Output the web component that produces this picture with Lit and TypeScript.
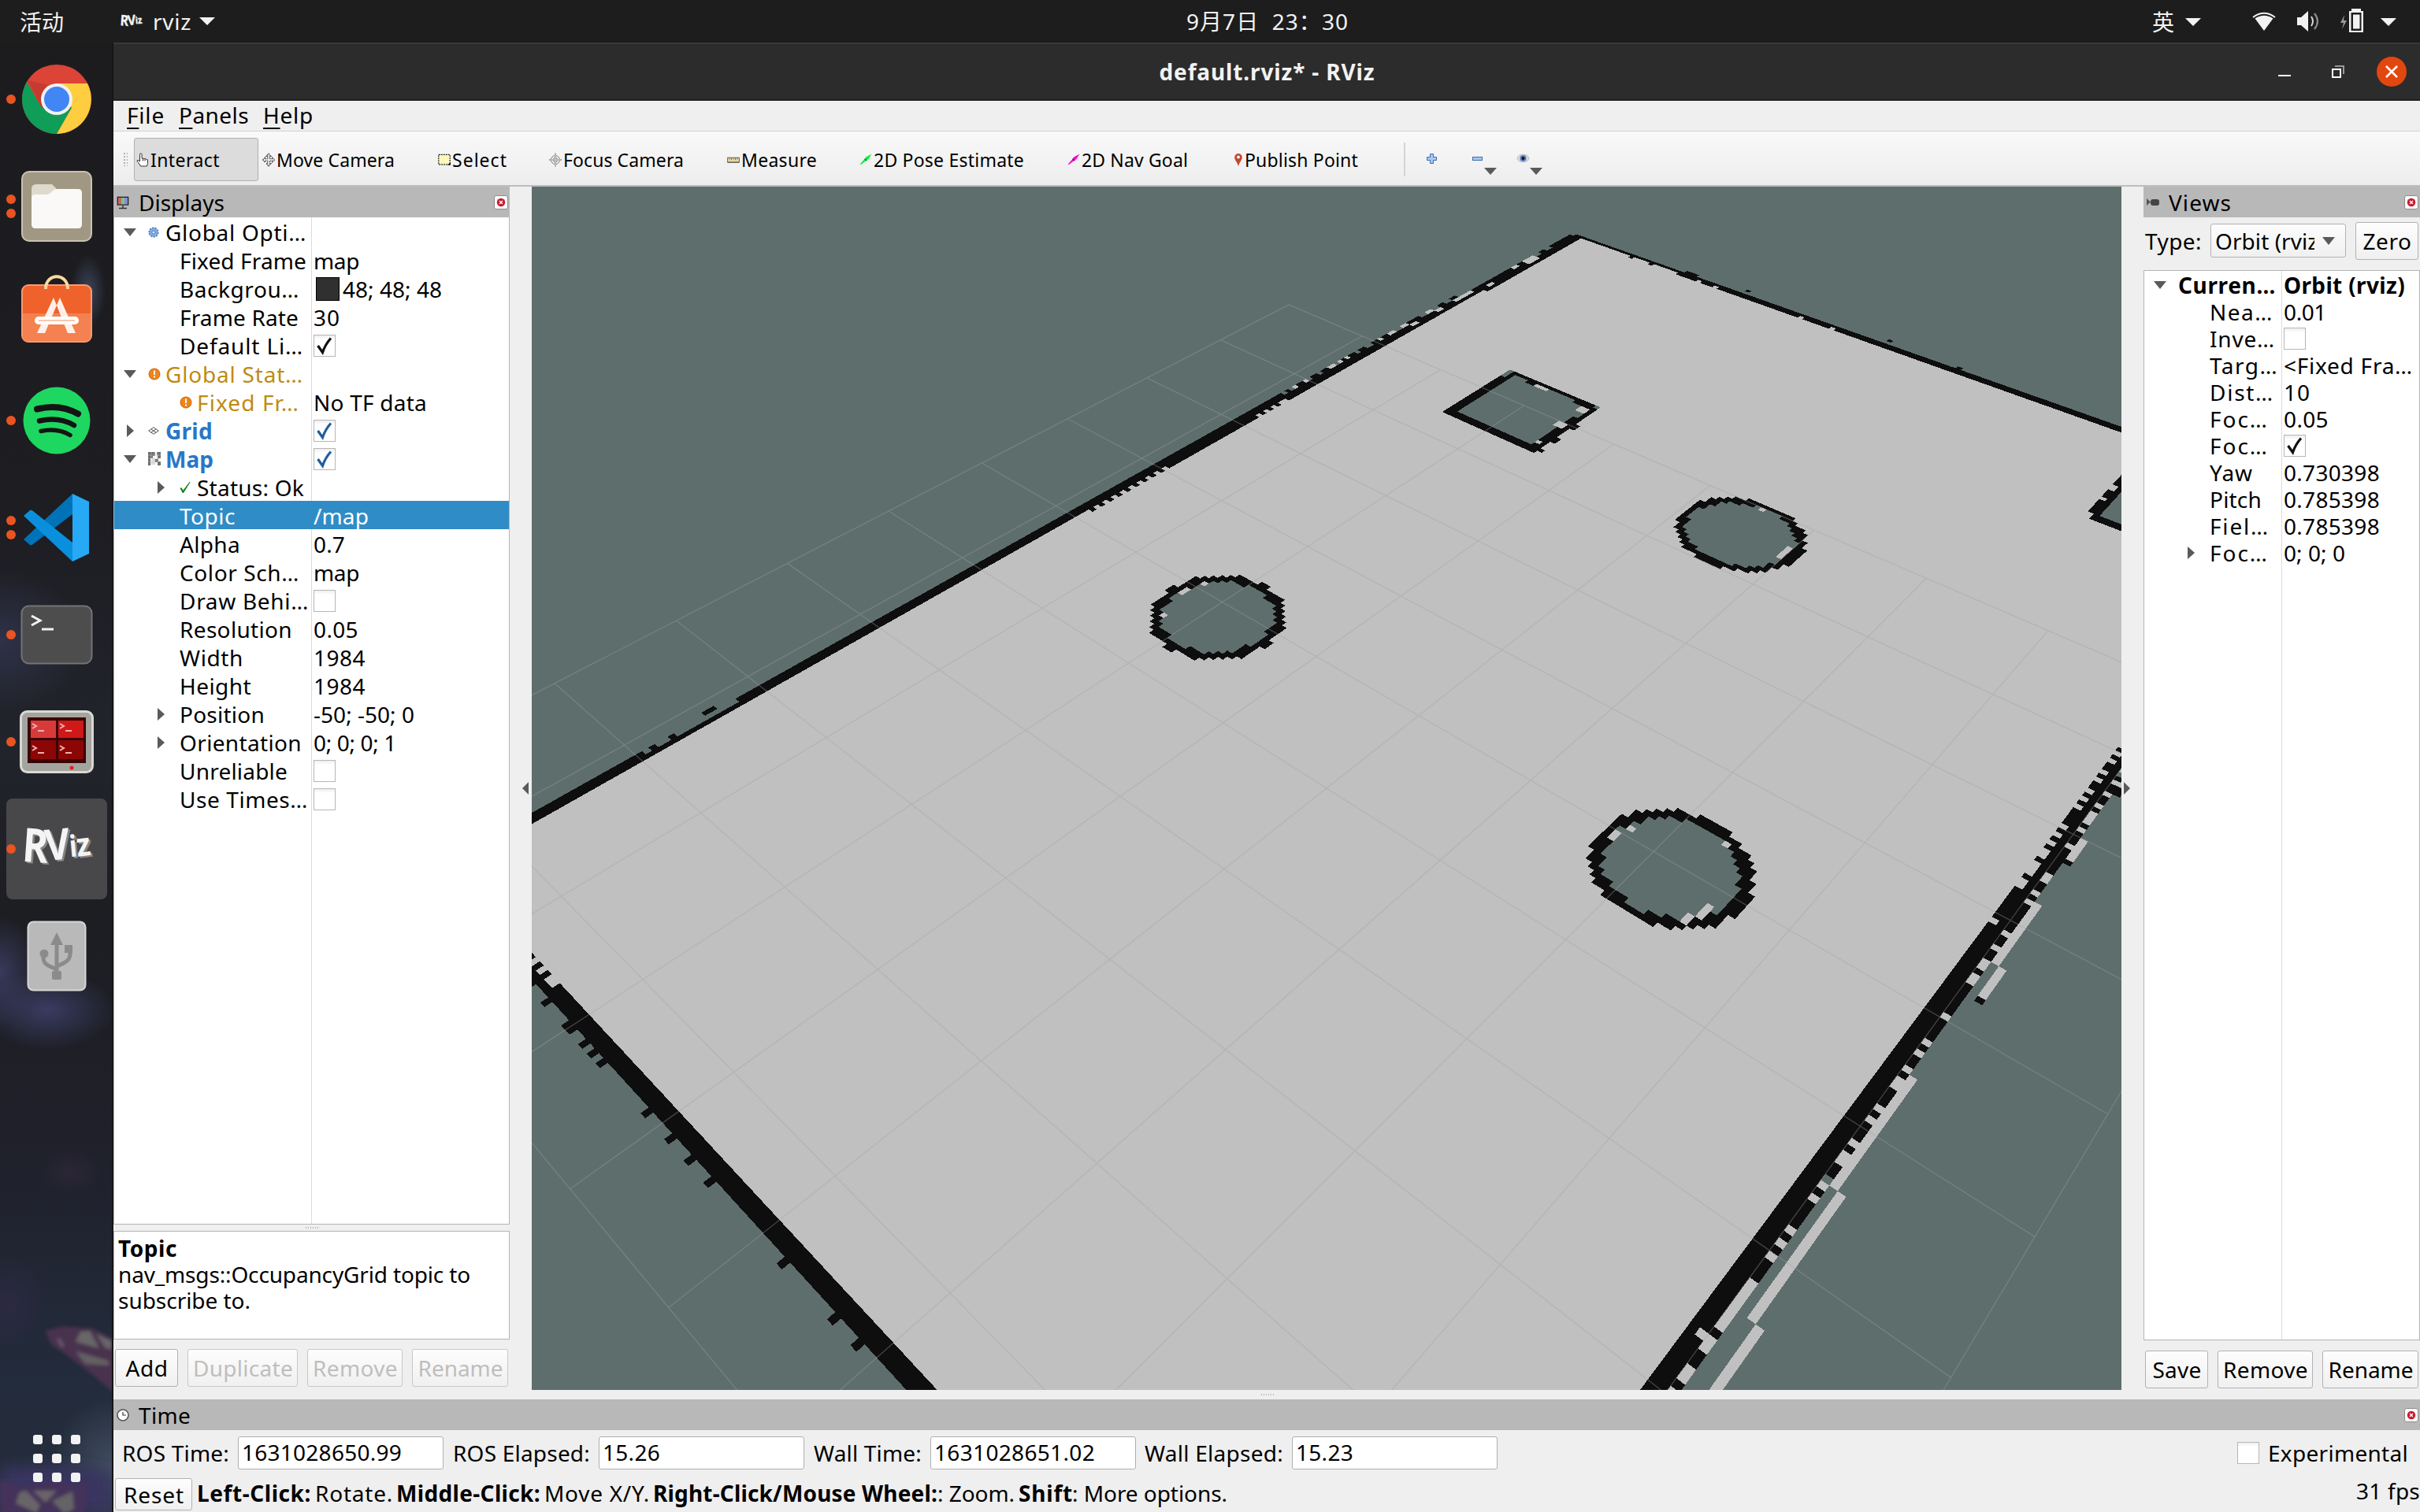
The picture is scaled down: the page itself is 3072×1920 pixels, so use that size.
import { LitElement, html, svg, css, nothing } from "lit";
import { customElement, property } from "lit/decorators.js";

const FAMILY = '"Noto Sans", "Noto Sans CJK SC", sans-serif';
const pen = document.createElement("canvas").getContext("2d")!;

/** Text tracked so that it fills `width` pixels. */
function fit(text: string, width: number, size = 28, bold = false, cls = "") {
  pen.font = `${bold ? 700 : 400} ${size}px ${FAMILY}`;
  const natural = pen.measureText(text).width;
  const spacing = (width + 3 - natural) / text.length;
  return html`<span
    class="fit ${bold ? "bold" : ""} ${size < 26 ? "small" : ""} ${cls}"
    style="letter-spacing:${spacing.toFixed(3)}px;width:${width + 3}px"
    >${text}</span
  >`;
}

const textStyles = css`
  .fit {
    display: inline-block;
    flex: none;
    font-size: 28px;
    white-space: pre;
    margin-left: -1px;
    margin-right: -2px;
  }
  .small {
    font-size: 23px;
  }
  .bold {
    font-weight: 700;
  }
  * {
    box-sizing: border-box;
  }
`;

/* ------------------------------------------------------------------ */
/* 3D viewport: orbit camera over the occupancy grid                   */
/* ------------------------------------------------------------------ */

const VIEW = { x: 675, y: 238, w: 2018, h: 1528 };
const CX = 1684;
const CY = 1002;
const FOCAL = VIEW.h / 2 / Math.tan(0.785398 / 2);
const YAW = 0.730398;
const CYAW = Math.cos(YAW);
const SYAW = Math.sin(YAW);
const K = Math.SQRT1_2;
const DIST = 10;
const CELL = 0.05;

type Pt = [number, number];
type Tone = "b" | "g" | "t";

function project(x: number, y: number): Pt {
  const t = K * (CYAW * x + SYAW * y);
  const s = -SYAW * x + CYAW * y;
  const d = DIST - t;
  return [CX + (FOCAL * s) / d, CY + (FOCAL * t) / d];
}

function unproject(px: number, py: number): Pt {
  const a = (px - CX) / FOCAL;
  const b = (CY - py) / FOCAL;
  const d = DIST / (1 - b);
  const t = (DIST - d) / K;
  const s = a * d;
  return [CYAW * t - SYAW * s, SYAW * t + CYAW * s];
}

function quad(x0: number, x1: number, y0: number, y1: number): string {
  const c = [project(x0, y0), project(x1, y0), project(x1, y1), project(x0, y1)];
  return "M" + c.map((p) => p[0].toFixed(1) + " " + p[1].toFixed(1)).join("L") + "Z";
}

class Layer {
  cells = new Map<string, Tone>();
  set(i: number, j: number, c: Tone) {
    this.cells.set(i + "," + j, c);
  }
  at(pts: Pt[], c: Tone) {
    for (const [px, py] of pts) {
      const [x, y] = unproject(px, py);
      this.set(Math.floor(x / CELL), Math.floor(y / CELL), c);
    }
  }
  /** Fill the cells x0..x1, y0..y1 (metres). */
  box(x0: number, x1: number, y0: number, y1: number, c: Tone) {
    for (let i = Math.round(x0 / CELL); i < Math.round(x1 / CELL); i++)
      for (let j = Math.round(y0 / CELL); j < Math.round(y1 / CELL); j++) this.set(i, j, c);
  }
  /** Runs along the X axis in the column that starts at y; limits are viewport rows. */
  strip(y: number, runs: [number, number, Tone][]) {
    const j = Math.round(y / CELL);
    for (let i = -90; i < 60; i++) {
      const py = project((i + 0.5) * CELL, (j + 0.5) * CELL)[1];
      const run = runs.find((r) => py >= r[0] && py < r[1]);
      if (run) this.set(i, j, run[2]);
    }
  }
  ring(x: number, y: number, r: number, inner: number) {
    for (let i = Math.floor((x - 1) / CELL); i < (x + 1) / CELL; i++)
      for (let j = Math.floor((y - 1) / CELL); j < (y + 1) / CELL; j++) {
        const d = Math.hypot((i + 0.5) * CELL - x, (j + 0.5) * CELL - y);
        if (d < inner) this.set(i, j, "t");
        else if (d < r) this.set(i, j, "b");
      }
  }
  path(c: Tone): string {
    let d = "";
    for (const [k, v] of this.cells) {
      if (v !== c) continue;
      const [i, j] = k.split(",").map(Number);
      d += quad(i * CELL, (i + 1) * CELL, j * CELL, (j + 1) * CELL);
    }
    return d;
  }
}

function noise(n: number): number {
  const v = Math.sin(n * 127.1 + 11.7) * 43758.5453;
  return v - Math.floor(v);
}

function buildMap(): Layer {
  const m = new Layer();
  // far-left wall, near part
  m.box(-3.6, 4.45, -3.8, -3.75, "b");
  for (let i = -72; i < 89; i++) {
    const [px] = project((i + 0.5) * CELL, -3.82);
    const thin = px > 818 && px < 955;
    if (!thin) m.set(i, -77, "b");
    if (px > 1375 && px < 1470 && i % 2 === 0) m.set(i, -75, "b");
    if (px > 1470 && px < 1585) m.set(i, -75, "b");
    if (px > 1585 && px < 1620 && i % 2 === 0) m.set(i, -75, "b");
  }
  m.at([[829, 948], [853, 934], [896, 908], [901, 905], [907, 902], [938, 886], [943, 883], [949, 880]], "b");
  // far-left wall, far part
  m.box(-5.3, -3.6, -3.8, -3.7, "b");
  m.box(-6.6, -5.3, -3.75, -3.7, "b");
  m.box(-8.35, -6.6, -3.7, -3.65, "b");
  for (let i = -106; i < -72; i++) {
    const a = noise(i * 3);
    if (a < 0.35) m.set(i, -77, "b");
    else if (a < 0.48) m.set(i, -77, "g");
  }
  for (let i = -166; i < -106; i++) {
    const j = i < -132 ? -75 : -76;
    const a = noise(Math.floor(i / 2) * 3.3);
    m.set(i, j, a < 0.68 ? "b" : "g");
    const b = noise(Math.floor(i / 2) * 5.1 + 2);
    if (b < 0.35) m.set(i, j - 1, "b");
    else if (b < 0.5 && a >= 0.4) m.set(i, j - 1, "g");
    else if (i < -132 && b < 0.75) m.set(i, j - 1, "b");
  }
  // top-right wall
  m.box(-8.35, -8.3, -3.75, 7, "b");
  m.box(-8.3, -8.25, -2.4, 7, "b");
  m.at([[2070, 328], [2096, 336]], "b");
  m.at([[2143, 346], [2147, 347], [2152, 349], [2216, 371], [2395, 434], [2487, 467]], "b");
  m.at([[2177, 366], [2155, 357], [2286, 404], [2327, 418]], "g");
  // near-left wall
  m.box(4.4, 4.45, -3.75, 1.6, "b");
  m.box(4.35, 4.4, -2.35, 1.6, "b");
  for (let j = -60; j < -48; j++) {
    if (j % 2 === 0) {
      m.set(87, j, "b");
      m.set(89, j, "b");
    }
  }
  m.at(
    [[690, 1275], [719, 1306], [722, 1310], [740, 1327], [750, 1339], [762, 1352], [818, 1416], [849, 1450], [875, 1477], [900, 1505], [992, 1607], [1057, 1679], [1086, 1711]],
    "b",
  );
  // right wall
  m.strip(3.9, [[1128, 1167, "b"], [1174, 1850, "b"]]);
  m.at(
    [[2571.7, 1114.3], [2587.7, 1092.3], [2599.3, 1076.7], [2607.3, 1065.7], [2616.7, 1056], [2624, 1046], [2627.7, 1041.7], [2631, 1037], [2634.3, 1032], [2641.7, 1021.7], [2649.3, 1011.7], [2656.7, 1001], [2660.3, 996.7], [2667.7, 987.3], [2674.3, 976.7], [2678, 971.7], [2686, 963.3], [2690.7, 952.7]],
    "b",
  );
  m.strip(3.95, [[700, 1850, "b"]]);
  const v = (n: number) => 1040 + n * 0.5612;
  const runs: [number, number, Tone][] = [
    [978, 982, "g"], [986, 992, "b"], [992, 997, "g"], [997, 1007, "b"], [1007, 1012, "g"], [1012, 1022.5, "b"],
    [1022.5, 1027.5, "g"], [1027.5, 1033, "b"], [1033, 1047, "g"], [1047, 1053, "b"], [1053, 1058, "g"],
    [1058, 1073.5, "b"], [1073.5, 1079.5, "g"], [1079.5, 1109, "b"], [1109, 1121.5, "g"], [1121.5, 1133.5, "b"],
    [1133.5, 1138, "g"], [1138, 1144, "b"], [1144, 1149.5, "g"],
  ];
  const marks =
    "b195 g258 b266 g284 b298 g324 b340 g352 b374 g438 b457 g500 b512 g524 b540 g561 b575 g589 b607 g649 b660 g679 b690 g729 b742 g757 b784 t812 g822 b840 g855 b870 g920 b937 g951 b968 g984 b1005 g1045 b1152 g1175 b1205 g1240 b1272 g1290".split(" ");
  marks.forEach((s, k) => {
    const next = marks[k + 1];
    runs.push([v(+s.slice(1)), v(next ? +next.slice(1) : 1330), s[0] as Tone]);
  });
  m.strip(4.0, runs);
  m.strip(4.05, [[987, 993, "b"], [993, 1004, "g"], [1004, 1011, "b"], [1069, 1094, "g"], [1094, 1100, "b"], [1147, 1225, "g"], [1372, 1508, "g"]]);
  m.strip(4.1, [[1230, 1268, "g"], [1268, 1277, "b"], [1516, 1680, "g"]]);
  m.strip(4.15, [[1686, 1850, "g"]]);
  m.at([[2161, 1692], [2164, 1698]], "g");
  // crate near the far corner
  m.box(-5.45, -4.45, -2.5, -1.45, "t");
  m.box(-5.45, -5.4, -2.45, -1.5, "b");
  m.box(-5.3, -4.4, -2.5, -2.4, "b");
  m.box(-5.45, -5.3, -2.45, -2.4, "b");
  m.box(-4.5, -4.4, -2.5, -1.5, "b");
  m.box(-5.4, -5.35, -2.25, -2.15, "b");
  m.box(-5.4, -5.35, -2.15, -1.98, "g");
  m.box(-5.4, -5.35, -1.7, -1.55, "b");
  m.box(-5.15, -4.4, -1.55, -1.45, "b");
  m.box(-5.35, -5.15, -1.5, -1.45, "b");
  m.box(-5.4, -5.3, -1.55, -1.45, "b");
  m.box(-5.35, -5.25, -1.6, -1.5, "g");
  m.box(-5.0, -4.9, -1.6, -1.5, "g");
  m.box(-4.6, -4.55, -1.55, -1.5, "g");
  m.box(-5.05, -4.95, -1.45, -1.4, "b");
  m.box(-4.75, -4.65, -1.45, -1.4, "b");
  m.box(-4.5, -4.45, -1.45, -1.4, "b");
  // round pillars
  m.ring(-0.85, -1.9, 0.53, 0.44);
  m.at([[1502, 752], [1506, 749], [1529, 740], [1477, 781]], "g");
  m.ring(-4.54, 0.565, 0.53, 0.45);
  m.at([[2236, 647], [2259, 706], [2264, 703], [2270, 700], [2275, 697]], "g");
  m.at([[2285, 703]], "b");
  m.ring(-0.96, 2.16, 0.53, 0.44);
  m.at([[2139, 1167], [2148, 1168], [2158, 1166], [2168, 1161], [2171, 1157], [2070, 1053], [2050, 1060], [2047, 1064], [2191, 1072]], "g");
  // crate at the right border
  m.box(-7.8, -6.8, 2.65, 3.7, "t");
  m.box(-7.8, -6.8, 2.6, 2.7, "b");
  m.box(-6.8, -6.7, 2.65, 3.7, "b");
  m.box(-7.1, -7.05, 2.6, 2.65, "g");
  m.box(-7.35, -7.25, 2.6, 2.65, "g");
  return m;
}

@customElement("map-viewport")
class MapViewport extends LitElement {
  static styles = css`
    :host {
      display: block;
      background: #5e6e6c;
      overflow: hidden;
    }
    svg {
      display: block;
    }
    .free {
      fill: #c0c0c0;
    }
    .wall {
      fill: #0e0e0e;
    }
    .unknown {
      fill: #5e6e6c;
    }
    .lines {
      fill: none;
      stroke: #a0a0a4;
      stroke-opacity: 0.38;
      stroke-width: 1.3;
    }
  `;
  render() {
    const m = buildMap();
    let lines = "";
    const p = (x: number, y: number) => project(x, y).map((n) => n.toFixed(1)).join(" ");
    for (let k = -5; k <= 5; k++) lines += `M${p(k, -5)}L${p(k, 5)}M${p(-5, k)}L${p(5, k)}`;
    return html`<svg width=${VIEW.w} height=${VIEW.h} viewBox="${VIEW.x} ${VIEW.y} ${VIEW.w} ${VIEW.h}">
      <g shape-rendering="crispEdges">
        <path class="free" d=${quad(-8.3, 4.4, -3.75, 3.95)}></path>
        <path class="unknown" d=${m.path("t")}></path>
        <path class="free" d=${m.path("g")}></path>
        <path class="wall" d=${m.path("b")}></path>
      </g>
      <path class="lines" d=${lines}></path>
    </svg>`;
  }
}

/* ------------------------------------------------------------------ */
/* Icons                                                               */
/* ------------------------------------------------------------------ */

const logoLetters = svg`
  <text x="1" y="45" font-size="60" transform="rotate(4 15 30)" textLength="33" lengthAdjust="spacingAndGlyphs">R</text>
  <text x="30" y="42" font-size="55" transform="rotate(-5 45 25)" textLength="32" lengthAdjust="spacingAndGlyphs">V</text>
  <text x="61" y="38" font-size="38" transform="rotate(-5 65 25)" textLength="10" lengthAdjust="spacingAndGlyphs">i</text>
  <text x="70" y="37" font-size="41" transform="rotate(-7 78 25)" textLength="18" lengthAdjust="spacingAndGlyphs">z</text>`;

const rvizLogo = (size: number) => html`<svg
  class="glyph"
  width=${size}
  height=${size * 0.62}
  viewBox="0 0 90 56"
  style="overflow:visible"
>
  <g font-family="Open Sans, Noto Sans, sans-serif" font-weight="700">
    <g fill="#858585" transform="translate(2.500 2)">${logoLetters}</g>
    <g fill="#f4f4f4">${logoLetters}</g>
  </g>
</svg>`;

const icon16 = (body: unknown) => html`<svg class="i16" width="16" height="18" viewBox="0 0 16 18">${body}</svg>`;

const toolIcons: Record<string, unknown> = {
  hand: icon16(svg`<path d="M4.500 11V2.200a1.300 1.300 0 0 1 2.600 0V7l1.800.3 1.900.3 1.900.5 1.800.8v4.600l-1 3.500H5.500L2.600 12.500.8 10.200 2 9.200z" fill="#fff" stroke="#333" stroke-width="1"/><path d="M8.500 7.500v3M11 8v2.500" stroke="#333"/>`),
  move: icon16(svg`<path d="M8 1l3 3.400H9.300v3.300h3.200V6L15.500 9l-3 3v-1.700H9.300v3.300H11L8 17l-3-3.400h1.700v-3.300H3.500V12l-3-3 3-3v1.700h3.200V4.400H5z" fill="#f4f4f4" stroke="#444" stroke-dasharray="1.500 .5" stroke-width="1.100"/>`),
  select: icon16(svg`<rect x=".8" y="2.300" width="14.400" height="12.600" fill="#fff7b8" stroke="#222" stroke-width="1.200" stroke-dasharray="2 1"/><path d="M12 15.500h4V12z" fill="#111"/>`),
  focus: icon16(svg`<g fill="none" stroke="#777"><circle cx="8" cy="9" r="5.500"/><circle cx="8" cy="9" r="2.700"/><path d="M8 .5v17M0 9h16" stroke="#999" stroke-width="2"/><path d="M8 1.500v15M1 9h14" stroke="#eee" stroke-width=".7"/></g>`),
  ruler: icon16(svg`<rect x=".6" y="6.200" width="14.800" height="5.600" fill="#e8d9a0" stroke="#666"/><path d="M3 6.500v2M5.500 6.500v2.600M8 6.500v2M10.500 6.500v2.600M13 6.500v2M.5 12.500h15" stroke="#555" stroke-width=".8"/>`),
  green: icon16(svg`<path d="M.5 14.800L6 8.500 8 5.500 15.500 1.500 11.500 8l-3 2L2 15z" fill="#0df03c"/><path d="M6.500 8l3 2" stroke="#074" stroke-width="1.200"/>`),
  pink: icon16(svg`<path d="M.5 14.800L6 8.500 8 5.500 15.500 1.500 11.500 8l-3 2L2 15z" fill="#f80dd0"/><path d="M6.500 8l3 2" stroke="#706" stroke-width="1.200"/>`),
  pin: html`<svg class="i16" width="13" height="18" viewBox="-1 0 13 18">
    <path d="M6 1a4.800 4.800 0 0 1 4.800 5C10.800 9 7.500 12 6 17 4.500 12 1.200 9 1.200 6A4.800 4.800 0 0 1 6 1z" fill="#c2482c"></path>
    <circle cx="6" cy="5.500" r="1.900" fill="#fff"></circle>
  </svg>`,
};

const downArrow = html`<svg class="arrow" width="16" height="10" viewBox="0 0 16 10"><path d="M0 0h16L8 10z" fill="#5a5a5a"></path></svg>`;
const rightArrow = html`<svg class="arrow" width="9" height="16" viewBox="0 0 9 16"><path d="M0 0v16l9-8z" fill="#5a5a5a"></path></svg>`;

const rowIcons: Record<string, unknown> = {
  gear: html`<svg width="14" height="14" viewBox="0 0 14 14">
    <circle cx="7" cy="7" r="5.600" fill="#8db4e6" stroke="#4a7ec0" stroke-width="2" stroke-dasharray="2.200 1.200"></circle>
    <circle cx="7" cy="7" r="2.200" fill="#d6e4f7" stroke="#3c6db0"></circle>
  </svg>`,
  warn: html`<svg width="16" height="16" viewBox="0 0 16 16">
    <circle cx="8" cy="8" r="7" fill="#f08418" stroke="#c96508"></circle>
    <path d="M8 3.500v5.500M8 10.500v2" stroke="#fff" stroke-width="2"></path>
  </svg>`,
  grid: html`<svg width="14" height="10" viewBox="0 0 14 10">
    <path d="M.7 5L7 .7 13.300 5 7 9.300zM3.800 2.900l6.300 4.200M3.800 7.100l6.300-4.200" fill="none" stroke="#555"></path>
  </svg>`,
  map: html`<svg width="16" height="17" viewBox="0 0 16 17">
    <path d="M0 0h9v5H6v3H3v9H0zM11 0h5v8h-3v4h3v5h-4v-4H9V9h3V4h-1z" fill="#6c6c6c"></path>
    <path d="M6 8h3v8H4v-5z" fill="#ddd"></path>
    <path d="M0 4h16M0 8h16M0 12h16M4 0v17M8 0v17M12 0v17" stroke="#ccc" stroke-width=".5"></path>
  </svg>`,
  ok: html`<svg width="14" height="14" viewBox="0 0 14 14"><path d="M.5 8l1.800-1 2.200 3.500L12.500 0h1.200L5 14H3.800z" fill="#1e8022"></path></svg>`,
};

const check = (state: "on" | "off", color = "#111") => html`<span class="check"
  >${state === "on"
    ? html`<svg width="26" height="26" viewBox="0 0 26 26"><path d="M4.500 13l6 8.500C13 14 16 9 21 3.500" fill="none" stroke=${color} stroke-width="3.200"></path></svg>`
    : nothing}</span
>`;

const closeButton = html`<svg class="close" width="18" height="18" viewBox="0 0 18 18">
  <rect x=".5" y=".5" width="17" height="17" rx="2.500" fill="#fafafa" stroke="#8e8e8e"></rect>
  <circle cx="9" cy="9" r="5.200" fill="#c8182f"></circle>
  <path d="M7 7l4 4M11 7l-4 4" stroke="#fff" stroke-width="1.400"></path>
</svg>`;

/* ------------------------------------------------------------------ */
/* Dock                                                                */
/* ------------------------------------------------------------------ */

const dockIcons = {
  chrome: html`<svg width="90" height="90" viewBox="-45 -45 90 90">
    <circle r="44" fill="#db4437"></circle>
    <path d="M-38.100-22A44 44 0 0 0 0 44L19.100 11 0 0-19 11z" fill="#0f9d58"></path>
    <path d="M38.100-20H0L19 11 0 44A44 44 0 0 0 39-20z" fill="#ffcd40"></path>
    <path d="M-37-24L-19 11-10-18z" fill="#b5352b" opacity=".55"></path>
    <circle r="20" fill="#f1f1f1"></circle>
    <circle r="16" fill="#4285f4"></circle>
  </svg>`,
  files: html`<svg width="90" height="90" viewBox="0 0 90 90">
    <rect x="1" y="1" width="88" height="88" rx="9" fill="#a19884" stroke="#c9c2b2" stroke-width="2"></rect>
    <path d="M13 62V23q0-6 6-6h20l7 7h0v38z" fill="#dedace"></path>
    <path d="M13 35q0-5 5-5h14q4 0 7-4 3-3 7-3h26q5 0 5 5v40q0 5-5 5H18q-5 0-5-5z" fill="#faf9f8"></path>
  </svg>`,
  software: html`<svg width="90" height="74" viewBox="0 0 90 74" overflow="visible">
    <rect x="1" y="1" width="88" height="72" rx="8" fill="#f0622c" stroke="#f79a72" stroke-width="2"></rect>
    <path d="M2 37h86v28q0 7-7 7H9q-7 0-7-7z" fill="#f4814f"></path>
    <path d="M31 6C31-15 59-15 59 6" fill="none" stroke="#fbd9a0" stroke-width="4"></path>
    <path d="M20 62h10L49 17h-8zM41 17h8l20 45H59z" fill="#fdf0e8"></path>
    <rect x="17" y="41" width="56" height="10" rx="5" fill="#fff"></rect>
    <path d="M22 46h46" stroke="#f7c6b0" stroke-width="2"></path>
  </svg>`,
  spotify: html`<svg width="86" height="86" viewBox="-43 -43 86 86">
    <circle r="42.500" fill="#1ed760"></circle>
    <g fill="none" stroke="#141414" stroke-linecap="round">
      <path d="M-25-14.500C-5-19.500 12-17 27-8.500" stroke-width="8"></path>
      <path d="M-22 .5C-5-3.500 10-1 22 6" stroke-width="6.500"></path>
      <path d="M-20 13.500C-6 10.500 6 12 17 18.500" stroke-width="5.500"></path>
    </g>
  </svg>`,
  code: html`<svg width="86" height="86" viewBox="0 0 86 86">
    <path d="M63 0L1 58l8 7q2 1 4-1L63 26z" fill="#0072b8"></path>
    <path d="M63 86L1 28l8-7q2-1 4 1L63 62z" fill="#0a8fdc"></path>
    <path d="M63 0l21 10v66L63 86z" fill="#27a9f5"></path>
  </svg>`,
  terminal: html`<svg width="92" height="76" viewBox="0 0 92 76">
    <rect x="1.500" y="1.500" width="89" height="73" rx="9" fill="#4d4d4d" stroke="#747474" stroke-width="2"></rect>
    <path d="M14 14l11 6-11 6M27 31h15" fill="none" stroke="#f2f2f2" stroke-width="3"></path>
  </svg>`,
  terminator: html`<svg width="94" height="80" viewBox="0 0 94 80">
    <rect x="1.500" y="1.500" width="91" height="77" rx="8" fill="#a4a49f" stroke="#d8d8d4" stroke-width="3"></rect>
    <rect x="10" y="9" width="74" height="58" fill="#3a0404"></rect>
    <path d="M14 13h32v22H14z" fill="#d83a3a"></path>
    <path d="M49 13h32v22H49z" fill="#d01818"></path>
    <path d="M14 38h32v24H14zM49 38h32v24H49z" fill="#8c0606"></path>
    <path d="M16 17l5 3-5 3M23 26h8M51 17l5 3-5 3M58 26h8M16 45l5 3-5 3M23 54h8M51 45l5 3-5 3M58 54h8" fill="none" stroke="#f0b0b0" stroke-width="2"></path>
    <circle cx="66" cy="73" r="2.500" fill="#e02020"></circle>
  </svg>`,
  rviz: rvizLogo(90),
  usb: html`<svg width="76" height="90" viewBox="0 0 76 90">
    <rect x="1.500" y="1.500" width="73" height="87" rx="7" fill="#b9b9b9" stroke="#d6d6d6" stroke-width="2"></rect>
    <g fill="none" stroke="#8b8b8b" stroke-width="5">
      <path d="M38 70V28M38 62C24 56 20 55 21 42M38 58C54 52 56 48 55 36"></path>
    </g>
    <path d="M30 31l8-16 8 16z" fill="#8b8b8b"></path>
    <circle cx="22" cy="42" r="5.500" fill="#8b8b8b"></circle>
    <rect x="48" y="31" width="10" height="10" fill="#8b8b8b"></rect>
    <rect x="32" y="64" width="12" height="11" rx="2" fill="#8b8b8b"></rect>
  </svg>`,
};

@customElement("app-dock")
class AppDock extends LitElement {
  static styles = css`
    :host {
      position: relative;
      display: flex;
      flex-direction: column;
      justify-content: space-between;
      width: 144px;
      padding: 4px 0 38px;
      box-sizing: border-box;
      border-right: 2px solid #151517;
      background:
        radial-gradient(ellipse 80px 90px at 144px 1810px, rgba(78, 92, 114, 0.7), transparent),
        radial-gradient(ellipse 85px 50px at 60px 1228px, rgba(66, 70, 118, 0.75), transparent),
        radial-gradient(ellipse 50px 70px at 0 1180px, rgba(66, 66, 110, 0.75), transparent),
        radial-gradient(ellipse 40px 30px at 90px 1434px, rgba(60, 44, 70, 0.4), transparent),
        radial-gradient(ellipse 50px 60px at 10px 1600px, rgba(60, 44, 84, 0.4), transparent),
        radial-gradient(ellipse 110px 90px at 0 760px, rgba(52, 56, 84, 0.75), transparent),
        radial-gradient(ellipse 22px 46px at 112px 316px, rgba(62, 72, 96, 0.9), transparent),
        linear-gradient(#1c1c1f 0, #1d1d22 600px, #22242c 900px, #1d1e22 1100px, #1f202a 1400px, #232c3c 1700px, #252c3a);
    }
    .leaves {
      position: absolute;
      left: 0;
      bottom: 0;
    }
    .slot {
      display: grid;
      grid-template-columns: 12px 104px 12px;
      width: 128px;
      height: 128px;
      margin: 4px 8px 8px;
      border-radius: 8px;
    }
    .slot.active {
      background: #48484b;
    }
    .dots {
      display: flex;
      flex-direction: column;
      align-items: center;
      justify-content: center;
      gap: 6px;
    }
    .dot {
      width: 12px;
      height: 12px;
      border-radius: 50%;
      background: #e95420;
    }
    .pic {
      display: flex;
      align-items: center;
      justify-content: center;
    }
    .apps {
      position: relative;
      display: grid;
      grid-template-columns: repeat(3, 12px);
      gap: 12px;
      margin-left: 42px;
    }
    .apps i {
      height: 12px;
      border-radius: 3px;
      background: #f2f2f2;
    }
  `;
  render() {
    const items: [keyof typeof dockIcons, number][] = [
      ["chrome", 1],
      ["files", 2],
      ["software", 0],
      ["spotify", 1],
      ["code", 2],
      ["terminal", 1],
      ["terminator", 1],
      ["rviz", 1],
      ["usb", 0],
    ];
    return html`<svg class="leaves" width="142" height="280" viewBox="0 0 142 280">
        <defs>
          <filter id="soft" x="-20%" y="-20%" width="140%" height="140%"><feGaussianBlur stdDeviation="2"></feGaussianBlur></filter>
          <filter id="wide" x="-40%" y="-40%" width="180%" height="180%"><feGaussianBlur stdDeviation="9"></feGaussianBlur></filter>
        </defs>
        <path d="M0 225Q60 215 142 230V280H0z" fill="#383660" filter="url(#wide)"></path>
        <g filter="url(#soft)">
          <path d="M57 50L80 44L118 47L144 60V128L118 106L84 80L66 68z" fill="#48304e"></path>
          <path d="M102 51l12-1 12 22-30-8zM122 54l20 9v10l-8-1z" fill="#686669"></path>
          <path d="M96 76l42 12v6l-30-2z" fill="#636164"></path>
          <path d="M74 60l6 10" stroke="#6a5a6a" stroke-width="4"></path>
          <path d="M0 238l24 10 46-6 30 4 12-6-4 42H0z" fill="#44305a"></path>
          <path d="M25 255l8-2 18 18-5 10-26-12zM42 253h30L58 268z" fill="#676568"></path>
          <path d="M66 266l26-12 2 22-12 6z" fill="#656366"></path>
        </g>
      </svg>
      <div>
        ${items.map(
          ([k, n]) => html`<div class="slot ${k === "rviz" ? "active" : ""}">
            <div class="dots">${Array.from({ length: n }, () => html`<span class="dot"></span>`)}</div>
            <div class="pic">${dockIcons[k]}</div>
          </div>`,
        )}
      </div>
      <div class="apps">${Array.from({ length: 9 }, () => html`<i></i>`)}</div>`;
  }
}

/* ------------------------------------------------------------------ */
/* Property tree                                                       */
/* ------------------------------------------------------------------ */

interface Row {
  level: number;
  name: string;
  w: number;
  open?: boolean;
  icon?: string;
  cls?: string;
  bold?: boolean;
  value?: string;
  vw?: number;
  box?: "on" | "off";
  swatch?: boolean;
}

const displayRows: Row[] = [
  { level: 0, name: "Global Opti…", w: 176, open: true, icon: "gear" },
  { level: 1, name: "Fixed Frame", w: 158, value: "map", vw: 55 },
  { level: 1, name: "Backgrou…", w: 149, value: "48; 48; 48", vw: 123, swatch: true },
  { level: 1, name: "Frame Rate", w: 148, value: "30", vw: 31 },
  { level: 1, name: "Default Li…", w: 154, box: "on" },
  { level: 0, name: "Global Stat…", w: 172, open: true, icon: "warn", cls: "warning" },
  { level: 1, name: "Fixed Fr…", w: 127, icon: "warn", cls: "warning", value: "No TF data", vw: 141 },
  { level: 0, name: "Grid", w: 57, open: false, icon: "grid", cls: "enabled", bold: true, box: "on" },
  { level: 0, name: "Map", w: 58, open: true, icon: "map", cls: "enabled", bold: true, box: "on" },
  { level: 1, name: "Status: Ok", w: 133, open: false, icon: "ok" },
  { level: 1, name: "Topic", w: 68, cls: "selected", value: "/map", vw: 67 },
  { level: 1, name: "Alpha", w: 74, value: "0.7", vw: 37 },
  { level: 1, name: "Color Sch…", w: 149, value: "map", vw: 55 },
  { level: 1, name: "Draw Behi…", w: 161, box: "off" },
  { level: 1, name: "Resolution", w: 140, value: "0.05", vw: 54 },
  { level: 1, name: "Width", w: 78, value: "1984", vw: 63 },
  { level: 1, name: "Height", w: 88, value: "1984", vw: 63 },
  { level: 1, name: "Position", w: 105, open: false, value: "-50; -50; 0", vw: 125 },
  { level: 1, name: "Orientation", w: 152, open: false, value: "0; 0; 0; 1", vw: 102 },
  { level: 1, name: "Unreliable", w: 134, box: "off" },
  { level: 1, name: "Use Times…", w: 160, box: "off" },
];

const viewRows: Row[] = [
  { level: 0, name: "Curren…", w: 121, open: true, bold: true, value: "Orbit (rviz)", vw: 151 },
  { level: 1, name: "Nea…", w: 78, value: "0.01", vw: 51 },
  { level: 1, name: "Inve…", w: 80, box: "off" },
  { level: 1, name: "Targ…", w: 84, value: "<Fixed Fra…", vw: 161 },
  { level: 1, name: "Dist…", w: 79, value: "10", vw: 31 },
  { level: 1, name: "Foc…", w: 72, value: "0.05", vw: 54 },
  { level: 1, name: "Foc…", w: 72, box: "on" },
  { level: 1, name: "Yaw", w: 52, value: "0.730398", vw: 119 },
  { level: 1, name: "Pitch", w: 63, value: "0.785398", vw: 119 },
  { level: 1, name: "Fiel…", w: 73, value: "0.785398", vw: 119 },
  { level: 1, name: "Foc…", w: 72, open: false, value: "0; 0; 0", vw: 75 },
];

@customElement("property-tree")
class PropertyTree extends LitElement {
  @property({ attribute: false }) rows: Row[] = [];
  @property({ reflect: true }) kind = "displays";
  static styles = [
    textStyles,
    css`
      :host {
        display: block;
        box-sizing: border-box;
        background: linear-gradient(#dcdcdc, #dcdcdc) 250px 0 / 1px 100% no-repeat #fff;
        border: 1px solid #b4b4b4;
        border-top: 0;
        color: #000;
      }
      :host([kind="views"]) {
        background-position: 174px 0;
        border-top: 1px solid #b4b4b4;
        padding-top: 1px;
      }
      .row {
        display: grid;
        grid-template-columns: 251px 1fr;
        height: 36px;
        line-height: 34px;
      }
      :host([kind="views"]) .row {
        grid-template-columns: 175px 1fr;
        height: 34px;
      }
      .name,
      .value {
        display: flex;
        align-items: center;
        min-width: 0;
      }
      :host([kind="displays"]) .name,
      :host([kind="displays"]) .value {
        padding-top: 1px;
      }
      .name {
        padding-left: 12px;
      }
      .value {
        padding-left: 3px;
      }
      .level1 {
        padding-left: 54px;
      }
      .twist {
        display: flex;
        justify-content: center;
        width: 16px;
        margin-right: 15px;
      }
      .level1 .twist {
        width: 10px;
        margin-right: 20px;
      }
      .pic {
        display: flex;
        align-items: center;
        width: 16px;
        margin-right: 7px;
      }
      .level1 .twist.iconic {
        margin-right: 19px;
      }
      :host([kind="views"]) .twist {
        margin-right: 16px;
      }
      :host([kind="views"]) .level1 .twist {
        margin-right: 20px;
      }
      .warning .name {
        color: #c08a10;
      }
      .enabled .name {
        color: #2a76c6;
      }
      .selected {
        background: #308cc6;
        color: #fff;
      }
      .check {
        display: block;
        width: 28px;
        height: 28px;
        border: 1px solid #b6b6b6;
        background: linear-gradient(#eee, #fff 5px);
        margin-left: -1px;
      }
      .check svg {
        display: block;
      }
      .swatch {
        width: 30px;
        height: 30px;
        margin: 0 5px 0 2px;
        background: #303030;
        border: 1px solid #000;
      }
    `,
  ];
  render() {
    return this.rows.map(
      (r) => html`<div class="row ${r.cls ?? ""}">
        <div class="name level${r.level}">
          <span class="twist ${r.icon ? "iconic" : ""}">${r.open === undefined ? nothing : r.open ? downArrow : rightArrow}</span>
          ${r.icon ? html`<span class="pic">${rowIcons[r.icon]}</span>` : nothing}${fit(r.name, r.w, 28, r.bold)}
        </div>
        <div class="value">
          ${r.box ? check(r.box, r.cls === "enabled" ? "#1d5f9f" : "#111") : nothing}
          ${r.swatch ? html`<span class="swatch"></span>` : nothing}
          ${r.value ? fit(r.value, r.vw!, 28, r.bold) : nothing}
        </div>
      </div>`,
    );
  }
}

/* ------------------------------------------------------------------ */
/* Application                                                         */
/* ------------------------------------------------------------------ */

const tools: { icon: string; label: string; w: number; slot: number; on?: boolean }[] = [
  { icon: "hand", label: "Interact", w: 85, slot: 160, on: true },
  { icon: "move", label: "Move Camera", w: 147, slot: 223 },
  { icon: "select", label: "Select", w: 67, slot: 141 },
  { icon: "focus", label: "Focus Camera", w: 150, slot: 226 },
  { icon: "ruler", label: "Measure", w: 93, slot: 168 },
  { icon: "green", label: "2D Pose Estimate", w: 188, slot: 264 },
  { icon: "pink", label: "2D Nav Goal", w: 132, slot: 210 },
  { icon: "pin", label: "Publish Point", w: 141, slot: 220 },
];

@customElement("app-root")
class AppRoot extends LitElement {
  static styles = [
    textStyles,
    css`
      :host {
        display: grid;
        grid-template: 54px 1866px / 144px 2928px;
        width: 3072px;
        height: 1920px;
        overflow: hidden;
        background: #efefef;
        color: #000;
        font-family: "Noto Sans", "Noto Sans CJK SC", sans-serif;
        font-size: 28px;
      }
      .topbar {
        grid-column: 1 / 3;
        display: grid;
        grid-template-columns: 1fr auto 1fr;
        align-items: center;
        background: #1d1d1d;
        color: #f2f2f2;
        line-height: 54px;
      }
      .topbar .left,
      .topbar .right {
        display: flex;
        align-items: center;
      }
      .left {
        padding-left: 25px;
      }
      .left .glyph {
        margin: 0 14px 0 71px;
      }
      .left .tri {
        margin-left: 12px;
      }
      .right {
        justify-content: flex-end;
        padding-right: 30px;
      }
      .right .cjk {
        margin-right: 12px;
      }
      .cjk {
        font-family: "Noto Sans CJK SC", sans-serif;
      }
      .clock {
        padding-left: 144px;
        width: 346px;
        white-space: pre;
      }
      .window {
        display: flex;
        flex-direction: column;
        min-width: 0;
      }
      .title {
        display: grid;
        grid-template-columns: 1fr auto 1fr;
        align-items: center;
        height: 74px;
        background: #2c2c2c;
        border-top: 2px solid #393939;
        border-bottom: 2px solid #212121;
        color: #f2f2f2;
      }
      .title .btns {
        display: flex;
        justify-content: flex-end;
        align-items: center;
        padding-right: 17px;
      }
      .menubar {
        display: flex;
        gap: 21px;
        height: 39px;
        padding: 1px 0 0 18px;
        line-height: 35px;
        border-bottom: 1px solid #d2d2d2;
      }
      .menubar u {
        text-decoration-thickness: 2px;
        text-underline-offset: 5px;
      }
      .toolbar {
        display: flex;
        align-items: center;
        height: 71px;
        padding: 2px 0 0 13px;
        background: linear-gradient(#f9f9f9, #ededed);
        border-bottom: 2px solid #bdbdbd;
      }
      .handle {
        width: 5px;
        height: 17px;
        margin-right: 8px;
        background: radial-gradient(circle at 1px 1px, #b0b0b0 1px, transparent 1px) 0 0 / 4px 4px;
      }
      .tool {
        display: flex;
        align-items: center;
        height: 55px;
      }
      .tool .face {
        display: flex;
        align-items: center;
        gap: 3px;
        height: 55px;
        padding: 1px 0 0 2px;
        border: 1px solid transparent;
        border-radius: 3px;
      }
      .tool .face.on {
        width: 158px;
        background: #dcdcdc;
        border-color: #b0b0b0;
      }
      .face svg {
        flex: none;
      }
      .sep {
        width: 2px;
        height: 43px;
        background: #d4d4d4;
      }
      .main {
        display: grid;
        grid-template-columns: 503px 28px 2018px 28px 351px;
        height: 1528px;
      }
      .panel {
        display: flex;
        flex-direction: column;
      }
      .head {
        display: flex;
        align-items: center;
        height: 39px;
        padding: 0 2px 0 4px;
        background: #b8b8b8;
        line-height: 38px;
      }
      .head .ico {
        flex: none;
        margin-right: 13px;
      }
      .head .close {
        margin-left: auto;
      }
      .displays property-tree {
        height: 1279px;
      }
      .grip {
        height: 8px;
        width: 18px;
        margin-left: 244px;
        padding-top: 3px;
      }
      .grip i,
      .center-grip i {
        display: block;
        width: 16px;
        height: 2px;
        background: repeating-linear-gradient(90deg, #b4b4b4 0 1px, transparent 1px 3px);
      }
      .desc {
        height: 138px;
        padding: 5px 5px 0 6px;
        border: 1px solid #b4b4b4;
        background: #fff;
        line-height: 33px;
      }
      .desc div {
        height: 33px;
      }
      .buttons {
        display: flex;
        gap: 12px;
        padding: 12px 2px 0;
      }
      .btn {
        display: flex;
        align-items: center;
        justify-content: center;
        height: 48px;
        border: 1px solid #b2b2b2;
        border-radius: 3px;
        background: linear-gradient(#fdfdfd, #f0f0f0);
        line-height: 46px;
      }
      .btn.off {
        color: #bebebe;
        border-color: #c8c8c8;
      }
      .split {
        display: flex;
        align-items: center;
        justify-content: flex-end;
        padding: 0 4px 0 0;
      }
      .split.r {
        justify-content: flex-start;
        padding: 0 0 0 3px;
      }
      .type {
        display: flex;
        align-items: center;
        height: 67px;
        padding: 0 2px 8px 3px;
      }
      .combo {
        display: flex;
        align-items: center;
        justify-content: space-between;
        width: 172px;
        height: 43px;
        margin: 0 12px 0 auto;
        padding: 0 13px 0 5px;
        border: 1px solid #b2b2b2;
        border-radius: 3px;
        background: linear-gradient(#fdfdfd, #f0f0f0);
        line-height: 40px;
      }
      .clip {
        width: 126px;
        padding-left: 1px;
        overflow: hidden;
        white-space: nowrap;
      }
      .views property-tree {
        height: 1359px;
      }
      .views .buttons {
        padding-top: 13px;
      }
      .center-grip {
        height: 12px;
        padding: 5px 0 0 1457px;
      }
      .fields {
        display: flex;
        align-items: center;
        height: 58px;
        padding-left: 12px;
        line-height: 40px;
      }
      .input {
        width: 261px;
        height: 42px;
        padding-left: 5px;
        border: 1px solid #b0b0b0;
        border-radius: 3px;
        background: #fff;
        line-height: 38px;
      }
      .fields .check {
        width: 28px;
        height: 28px;
        margin: 0 12px 0 auto;
        border: 1px solid #b6b6b6;
        background: linear-gradient(#eee, #fff 5px);
      }
      .status {
        display: flex;
        align-items: flex-start;
        height: 46px;
        padding: 3px 2px 0;
        line-height: 39px;
      }
      .status .btn {
        height: 41px;
        width: 98px;
        margin-right: 7px;
      }
      .status .end {
        margin: -3px 0 0 auto;
      }
    `,
  ];

  private button(label: string, w: number, width: number, off = false) {
    return html`<span class="btn ${off ? "off" : ""}" style="width:${width}px">${fit(label, w)}</span>`;
  }

  private topbar() {
    const tri = html`<svg class="tri" width="20" height="10" viewBox="0 0 20 10"><path d="M0 0h20L10 10z" fill="#f2f2f2"></path></svg>`;
    return html`<div class="topbar">
      <div class="left"><span class="cjk">活动</span>${rvizLogo(29)}${fit("rviz", 46)}${tri}</div>
      <div class="clock">${fit("9月7日  23：30", 203)}</div>
      <div class="right">
        <span class="cjk">英</span>
        <svg width="270" height="34" viewBox="2772 10 270 34">
          <g fill="#f2f2f2">
            <path d="M2774 23h20l-10 10zM3022 23h20l-10 10z"></path>
            <path d="M2862.500 23.500Q2874 16 2885.500 23.500L2874 39z"></path>
            <path d="M2860 22Q2874 11.500 2888 22" fill="none" stroke="#f2f2f2" stroke-width="2"></path>
            <path d="M2916 22h5l9-8v26l-9-8h-5z"></path>
            <path d="M2985 11h12v3h3v27h-18V14h3zM2984.500 16v23h13V16z" fill-rule="evenodd"></path>
            <path d="M2987 18.500h8.500v18H2987z"></path>
          </g>
          <path d="M2934 21q4 6 0 12" fill="none" stroke="#d8d8d8" stroke-width="2"></path>
          <path d="M2938 17q8 10 0 20" fill="none" stroke="#8a8a8a" stroke-width="2.200"></path>
          <path d="M2976 19l-5 10h4l-2 8 6-11h-4z" fill="#9a9a9a"></path>
        </svg>
      </div>
    </div>`;
  }

  private title() {
    return html`<div class="title">
      <span></span>${fit("default.rviz* - RViz", 271, 28, true)}
      <div class="btns">
        <svg width="164" height="38" viewBox="2891 71 164 38">
          <path d="M2892 95h16" stroke="#fff" stroke-width="2"></path>
          <path d="M2964 83h11v10" fill="none" stroke="#999" stroke-width="2"></path>
          <rect x="2961" y="87" width="10" height="10" fill="none" stroke="#fff" stroke-width="2"></rect>
          <circle cx="3036" cy="90" r="19" fill="#e2470f"></circle>
          <path d="M3029 83l14 14M3043 83l-14 14" stroke="#fff" stroke-width="2.600"></path>
        </svg>
      </div>
    </div>`;
  }

  private menu(first: string, rest: string, w: number) {
    pen.font = `400 28px ${FAMILY}`;
    const sp = (w + 3 - pen.measureText(first + rest).width) / (first + rest).length;
    return html`<span class="fit" style="letter-spacing:${sp.toFixed(3)}px;width:${w + 3}px"><u>${first}</u>${rest}</span>`;
  }

  render() {
    return html`${this.topbar()}
      <app-dock></app-dock>
      <div class="window">
        ${this.title()}
        <div class="menubar">${this.menu("F", "ile", 45)}${this.menu("P", "anels", 86)}${this.menu("H", "elp", 61)}</div>
        <div class="toolbar">
          <span class="handle"></span>
          ${tools.map(
            (t) => html`<span class="tool" style="width:${t.slot}px"
              ><span class="face ${t.on ? "on" : ""}">${toolIcons[t.icon]}${fit(t.label, t.w, 23)}</span></span
            >`,
          )}
          <span class="sep"></span>
          <svg width="180" height="40" viewBox="1786 183 180 40" overflow="visible">
            <path d="M1817.500 196.500h4v4h4v4h-4v4h-4v-4h-4v-4h4z" fill="#a9c8ee" stroke="#3a6db4"></path>
            <rect x="1871.500" y="200.500" width="12" height="4" fill="#a9c8ee" stroke="#3a6db4"></rect>
            <path d="M1886 214h16l-8 9zM1944 214h16l-8 9z" fill="#5a5a5a"></path>
            <ellipse cx="1935.500" cy="202" rx="7.500" ry="5" fill="#d8d8d8" stroke="#aaa" stroke-width=".6"></ellipse>
            <circle cx="1935.500" cy="202" r="4" fill="#5a78c0"></circle>
            <circle cx="1935.500" cy="202" r="1.900" fill="#111"></circle>
          </svg>
        </div>
        <div class="main">
          <div class="panel displays">
            <div class="head">
              <svg class="ico" width="16" height="18" viewBox="0 0 16 18">
                <rect x=".7" y="1.700" width="14.600" height="11" fill="#222"></rect>
                <path d="M2 3h4v8.500H2z" fill="#c46a6a"></path>
                <path d="M6 3h4v8.500H6z" fill="#7fc47f"></path>
                <path d="M10 3h4v8.500h-4z" fill="#8a8ae0"></path>
                <path d="M8 13v3M3 16.500h10" stroke="#333" stroke-width="1.500"></path></svg
              >${fit("Displays", 106)}${closeButton}
            </div>
            <property-tree kind="displays" .rows=${displayRows}></property-tree>
            <div class="grip"><i></i></div>
            <div class="desc">
              <div>${fit("Topic", 72, 28, true)}</div>
              <div>${fit("nav_msgs::OccupancyGrid topic to", 444)}</div>
              <div>${fit("subscribe to.", 165)}</div>
            </div>
            <div class="buttons">
              ${this.button("Add", 51, 80)}${this.button("Duplicate", 124, 140, true)}${this.button("Remove", 105, 121, true)}${this.button("Rename", 105, 122, true)}
            </div>
          </div>
          <div class="split"><svg width="8" height="16" viewBox="0 0 8 16"><path d="M8 0v16L0 8z" fill="#5a5a5a"></path></svg></div>
          <map-viewport></map-viewport>
          <div class="split r"><svg width="8" height="16" viewBox="0 0 8 16"><path d="M0 0v16l8-8z" fill="#5a5a5a"></path></svg></div>
          <div class="panel views">
            <div class="head">
              <svg class="ico" width="16" height="10" viewBox="0 0 16 10">
                <path d="M0 0l5 4.500L0 9z" fill="#555"></path>
                <rect x="5" y="1" width="11" height="8" rx="3" fill="#444"></rect></svg
              >${fit("Views", 77)}${closeButton}
            </div>
            <div class="type">
              ${fit("Type:", 69)}<span class="combo"><span class="clip">${fit("Orbit (rviz)", 136)}</span>${downArrow}</span
              >${this.button("Zero", 59, 80)}
            </div>
            <property-tree kind="views" .rows=${viewRows}></property-tree>
            <div class="buttons">${this.button("Save", 59, 80)}${this.button("Remove", 105, 121)}${this.button("Rename", 105, 122)}</div>
          </div>
        </div>
        <div class="center-grip"><i></i></div>
        <div class="head">
          <svg class="ico" width="16" height="16" viewBox="0 0 16 16">
            <circle cx="8" cy="8" r="7" fill="#fff" stroke="#555" stroke-width="1.600"></circle>
            <path d="M8 4v4h4" fill="none" stroke="#333" stroke-width="1.200"></path></svg
          >${fit("Time", 63)}${closeButton}
        </div>
        <div class="fields">
          ${this.field("ROS Time:", 133, "1631028650.99", 200, 13)}${this.field("ROS Elapsed:", 171, "15.26", 70, 13)}${this.field("Wall Time:", 134, "1631028651.02", 201, 12)}${this.field("Wall Elapsed:", 173, "15.23", 70, 12)}
          <span class="check"></span>${fit("Experimental", 175)}<span style="width:17px"></span>
        </div>
        <div class="status">
          <span class="btn">${fit("Reset", 74)}</span>
          ${this.hint("Left-Click:", 142, true, 8)}${this.hint("Rotate.", 96, false, 7)}${this.hint("Middle-Click:", 180, true, 8)}${this.hint("Move X/Y.", 131, false, 7)}${this.hint("Right-Click/Mouse Wheel:", 358, true, 3)}${this.hint(": Zoom.", 95, false, 8)}${this.hint("Shift", 66, true, 2)}${this.hint(": More options.", 194, false, 0)}
          <span class="end">${fit("31 fps", 78)}</span>
        </div>
      </div>`;
  }

  private hint(text: string, w: number, bold: boolean, gap: number) {
    return html`${fit(text, w, 28, bold)}<span style="width:${gap}px"></span>`;
  }

  private field(label: string, lw: number, value: string, vw: number, gap: number) {
    return html`${fit(label, lw)}<span style="width:13px"></span><span class="input">${fit(value, vw)}</span><span style="width:${gap}px"></span>`;
  }
}
